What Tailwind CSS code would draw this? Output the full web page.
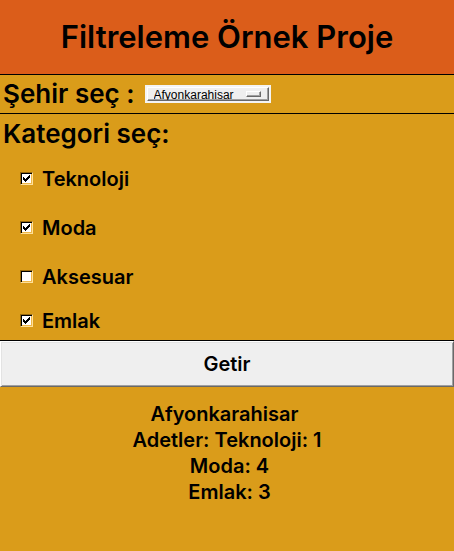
<!DOCTYPE html>
<html lang="tr">
<head>
<meta charset="utf-8">
<meta name="viewport" content="width=device-width, initial-scale=1">
<title>Filtreleme Örnek Proje</title>
<script src="https://cdn.jsdelivr.net/npm/@tailwindcss/browser@4"></script>
</head>
<body class="min-h-screen bg-[#da9c1a] font-['Inter',sans-serif] font-semibold text-black">
<header class="border-b border-black bg-[#db5d1a] py-[17px] text-center">
  <h1 class="text-[31px] leading-10">Filtreleme Örnek Proje</h1>
</header>
<main>
  <form>
    <div class="flex items-center gap-[10px] border-b border-black px-[3px]">
      <label for="city" class="text-[26px] leading-[38px]">Şehir seç :</label>
      <div class="relative border-2 border-[#f4f4f4]">
        <select id="city" class="block h-[14px] w-[122px] appearance-none border border-t-white border-l-white border-r-[#696969] border-b-[#696969] bg-[#efefef] pl-[6px] font-['Liberation_Sans',sans-serif] text-xs leading-[14px] font-normal shadow-[inset_-1px_-1px_#a0a0a0] outline-none">
          <option>Afyonkarahisar</option>
        </select>
        <span class="pointer-events-none absolute top-1 right-2 h-[6px] w-[15px] border border-t-white border-l-white border-r-[#696969] border-b-[#696969] bg-[#efefef] shadow-[inset_-1px_-1px_#a0a0a0]"></span>
      </div>
    </div>
    <fieldset class="border-b border-black">
      <legend class="px-[3px] text-[26px] leading-10">Kategori seç:</legend>
      <div class="flex flex-col pl-5 text-xl">
        <label class="flex h-[49px] items-center gap-[9px]">
          <span class="grid size-[13px]">
            <input type="checkbox" checked class="peer col-start-1 row-start-1 size-[13px] appearance-none border border-t-[#98690d] border-l-[#98690d] border-r-[#ffe09a] border-b-[#ffe09a] bg-white shadow-[inset_1px_1px_#000,inset_-1px_-1px_#f0b848]">
            <svg class="pointer-events-none invisible col-start-1 row-start-1 peer-checked:visible" viewBox="0 0 13 13" shape-rendering="crispEdges" aria-hidden="true"><path d="M3 5h1v1h1v1h1v-1h1v-1h1v-1h1v-1h1v3h-1v1h-1v1h-1v1h-1v1h-1v-1h-1v-1h-1z"/></svg>
          </span>
          Teknoloji
        </label>
        <label class="flex h-[49px] items-center gap-[9px]">
          <span class="grid size-[13px]">
            <input type="checkbox" checked class="peer col-start-1 row-start-1 size-[13px] appearance-none border border-t-[#98690d] border-l-[#98690d] border-r-[#ffe09a] border-b-[#ffe09a] bg-white shadow-[inset_1px_1px_#000,inset_-1px_-1px_#f0b848]">
            <svg class="pointer-events-none invisible col-start-1 row-start-1 peer-checked:visible" viewBox="0 0 13 13" shape-rendering="crispEdges" aria-hidden="true"><path d="M3 5h1v1h1v1h1v-1h1v-1h1v-1h1v-1h1v3h-1v1h-1v1h-1v1h-1v1h-1v-1h-1v-1h-1z"/></svg>
          </span>
          Moda
        </label>
        <label class="flex h-[49px] items-center gap-[9px]">
          <span class="grid size-[13px]">
            <input type="checkbox" class="peer col-start-1 row-start-1 size-[13px] appearance-none border border-t-[#98690d] border-l-[#98690d] border-r-[#ffe09a] border-b-[#ffe09a] bg-white shadow-[inset_1px_1px_#000,inset_-1px_-1px_#f0b848]">
            <svg class="pointer-events-none invisible col-start-1 row-start-1 peer-checked:visible" viewBox="0 0 13 13" shape-rendering="crispEdges" aria-hidden="true"><path d="M3 5h1v1h1v1h1v-1h1v-1h1v-1h1v-1h1v3h-1v1h-1v1h-1v1h-1v1h-1v-1h-1v-1h-1z"/></svg>
          </span>
          Aksesuar
        </label>
        <label class="flex h-[39px] items-center gap-[9px]">
          <span class="grid size-[13px]">
            <input type="checkbox" checked class="peer col-start-1 row-start-1 size-[13px] appearance-none border border-t-[#98690d] border-l-[#98690d] border-r-[#ffe09a] border-b-[#ffe09a] bg-white shadow-[inset_1px_1px_#000,inset_-1px_-1px_#f0b848]">
            <svg class="pointer-events-none invisible col-start-1 row-start-1 peer-checked:visible" viewBox="0 0 13 13" shape-rendering="crispEdges" aria-hidden="true"><path d="M3 5h1v1h1v1h1v-1h1v-1h1v-1h1v-1h1v3h-1v1h-1v1h-1v1h-1v1h-1v-1h-1v-1h-1z"/></svg>
          </span>
          Emlak
        </label>
      </div>
    </fieldset>
    <button type="button" class="block w-full border border-t-white border-l-white border-r-[#696969] border-b-[#696969] bg-[#efefef] py-2 text-xl shadow-[inset_1px_1px_#e3e3e3,inset_-1px_-1px_#a0a0a0]">Getir</button>
  </form>
  <output class="block pt-[14px] text-center text-xl leading-[26px] whitespace-pre">Afyonkarahisar 
Adetler: Teknoloji: 1
 Moda: 4
 Emlak: 3</output>
</main>
</body>
</html>
